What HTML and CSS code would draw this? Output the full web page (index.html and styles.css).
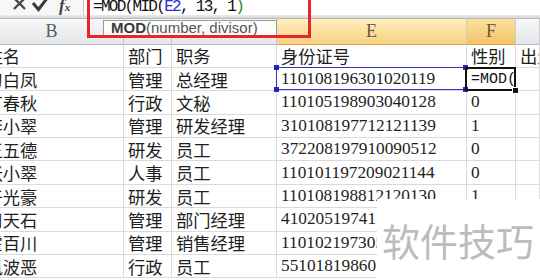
FILE: index.html
```html
<!DOCTYPE html>
<html>
<head>
  <meta charset="utf-8">
  <title>身份证号提取性别</title>
  <link rel="stylesheet" href="styles.css">
</head>
<body>
  <!-- formula bar -->
  <div class="formula-bar">
    <div class="fx-buttons">
      <svg class="btn-icons" width="52" height="15" viewBox="0 0 52 15">
        <path d="M14 -2 L25 9 M25 -2 L14 9" stroke="#4a4a4a" stroke-width="2.4" fill="none"/>
        <path d="M33 3 L38.5 9.5 L48 -3" stroke="#3a3a3a" stroke-width="3" fill="none"/>
      </svg>
      <span class="btn-fx">f<span class="fx-x">x</span></span>
    </div>
    <div class="formula-input">=MOD(MID(<span class="ref">E2</span>, 13, 1<span class="paren">)</span></div>
  </div>
  <div class="bar-gap"></div>

  <!-- sheet -->
  <div class="sheet">
    <div class="row head">
      <div class="h col-b">B</div>
      <div class="h">C</div>
      <div class="h">D</div>
      <div class="h sel">E</div>
      <div class="h sel active-col">F</div>
      <div class="h"></div>
    </div>
    <div class="row">
      <div class="c name">姓名</div>
      <div class="c">部门</div>
      <div class="c">职务</div>
      <div class="c">身份证号</div>
      <div class="c">性别</div>
      <div class="c">出生日期</div>
    </div>
    <div class="row">
      <div class="c name">刀白凤</div>
      <div class="c">管理</div>
      <div class="c">总经理</div>
      <div class="c ref-range">110108196301020119</div>
      <div class="c active"><span class="edit">=MOD(</span></div>
      <div class="c"></div>
    </div>
    <div class="row">
      <div class="c name">丁春秋</div>
      <div class="c">行政</div>
      <div class="c">文秘</div>
      <div class="c">110105198903040128</div>
      <div class="c">0</div>
      <div class="c"></div>
    </div>
    <div class="row">
      <div class="c name">李小翠</div>
      <div class="c">管理</div>
      <div class="c">研发经理</div>
      <div class="c">310108197712121139</div>
      <div class="c">1</div>
      <div class="c"></div>
    </div>
    <div class="row">
      <div class="c name">王五德</div>
      <div class="c">研发</div>
      <div class="c">员工</div>
      <div class="c">372208197910090512</div>
      <div class="c">0</div>
      <div class="c"></div>
    </div>
    <div class="row">
      <div class="c name">张小翠</div>
      <div class="c">人事</div>
      <div class="c">员工</div>
      <div class="c">110101197209021144</div>
      <div class="c">0</div>
      <div class="c"></div>
    </div>
    <div class="row">
      <div class="c name">干光豪</div>
      <div class="c">研发</div>
      <div class="c">员工</div>
      <div class="c">110108198812120130</div>
      <div class="c">1</div>
      <div class="c"></div>
    </div>
    <div class="row">
      <div class="c name">司天石</div>
      <div class="c">管理</div>
      <div class="c">部门经理</div>
      <div class="c">410205197411150217</div>
      <div class="c">1</div>
      <div class="c"></div>
    </div>
    <div class="row">
      <div class="c name">霍百川</div>
      <div class="c">管理</div>
      <div class="c">销售经理</div>
      <div class="c">110102197305120124</div>
      <div class="c">0</div>
      <div class="c"></div>
    </div>
    <div class="row">
      <div class="c name">风波恶</div>
      <div class="c">行政</div>
      <div class="c">员工</div>
      <div class="c">551018198607311126</div>
      <div class="c">0</div>
      <div class="c"></div>
    </div>
  </div>

  <!-- overlays -->
  <div class="tip"><b>MOD</b>(number, divisor)</div>
  <div class="annot"></div>
  <div class="watermark">软件技巧</div>
</body>
</html>
```

FILE: styles.css
```css
body {
  margin: 0;
  width: 540px;
  height: 280px;
  overflow: hidden;
  position: relative;
  background-color: #fff;
  font-family: "Liberation Serif", "Noto Sans CJK SC", serif;
  color: #1e1e1e;
}

/* formula bar */
.formula-bar {
  display: flex;
  height: 15px;
  overflow: hidden;
  background-color: #fff;
}

.fx-buttons {
  width: 83px;
  display: flex;
  align-items: flex-start;
  background-color: #f7f7f7;
  border-right: 1px solid #c8c8c8;
}

.btn-icons {
  display: block;
}

.btn-fx {
  margin-left: 7px;
  font-family: "Liberation Serif", serif;
  font-style: italic;
  font-weight: bold;
  font-size: 17px;
  line-height: 12px;
  color: #444;
}

.fx-x {
  font-size: 11px;
}

.formula-input {
  flex: 1;
  padding-left: 9px;
  font-family: "Liberation Mono", monospace;
  font-size: 16px;
  letter-spacing: -1.7px;
  line-height: 14px;
  color: #111;
  white-space: nowrap;
}

.ref {
  color: #2d2dd6;
}

.paren {
  color: #1d8a1d;
}

.bar-gap {
  height: 3px;
  background: linear-gradient(#ececec, #d6d6d6);
  border-bottom: 1px solid #b9b9b9;
}

/* sheet grid */
.sheet {
  height: 261px;
  overflow: hidden;
}

.row {
  display: grid;
  grid-template-columns: 124px 48px 105px 190px 49px 1fr;
  height: 23.4px;
}

.row.head {
  height: 25.5px;
}

.h {
  display: flex;
  align-items: center;
  justify-content: center;
  background: linear-gradient(#f7f8f9, #e3e5e8);
  border-right: 1px solid #c9cbce;
  border-bottom: 1px solid #b8bcc2;
  font-size: 18px;
  color: #5a5a5a;
  box-sizing: border-box;
}

.h.col-b {
  padding-right: 20px;
}

.h.sel {
  background: linear-gradient(#fdefbd, #f7d082);
  border-bottom-color: #e1a342;
  color: #6b5a3a;
}

.h.active-col {
  background: linear-gradient(#fbe2a0, #f3c266);
}

.c {
  display: flex;
  align-items: center;
  padding-left: 4px;
  border-right: 1px solid #dadada;
  border-bottom: 1px solid #dadada;
  white-space: nowrap;
  overflow: hidden;
  font-size: 17.3px;
  box-sizing: border-box;
}

.c.name {
  padding-left: 0;
  text-indent: -14.5px;
}

.edit {
  font-family: "Liberation Mono", monospace;
  font-size: 15px;
  color: #111;
}

/* range picked up by the formula */
.ref-range {
  position: relative;
  overflow: visible;
}

.ref-range::before {
  content: "";
  position: absolute;
  top: -1px;
  left: -1px;
  right: 0;
  bottom: 0;
  border: 1.5px solid #3232c8;
}

.ref-range::after {
  content: "";
  position: absolute;
  top: -3px;
  left: -3px;
  right: -2px;
  bottom: -2px;
  background:
    linear-gradient(#2424c0, #2424c0) left top / 5px 5px no-repeat,
    linear-gradient(#2424c0, #2424c0) right top / 5px 5px no-repeat,
    linear-gradient(#2424c0, #2424c0) left bottom / 5px 5px no-repeat,
    linear-gradient(#2424c0, #2424c0) right bottom / 5px 5px no-repeat;
}

/* active cell */
.active {
  position: relative;
  overflow: visible;
}

.active::after {
  content: "";
  position: absolute;
  top: -1px;
  left: -2px;
  right: -1px;
  bottom: -1px;
  border: 2px solid #111;
}

.active::before {
  content: "";
  position: absolute;
  right: -4px;
  bottom: -4px;
  width: 5px;
  height: 5px;
  background-color: #111;
  border: 1px solid #fff;
  z-index: 2;
}

/* function tooltip */
.tip {
  position: absolute;
  left: 103px;
  top: 20px;
  width: 174px;
  height: 16px;
  box-sizing: border-box;
  padding-left: 7px;
  background-color: #fdfdfd;
  border: 1px solid #9a9a9a;
  font-family: "Liberation Sans", sans-serif;
  font-size: 15px;
  line-height: 14px;
  color: #555;
  white-space: nowrap;
}

.tip b {
  color: #3a3a3a;
}

/* red annotation frame */
.annot {
  position: absolute;
  left: 87px;
  top: -4px;
  width: 224px;
  height: 42px;
  box-sizing: border-box;
  border: 3px solid #e5262b;
}

/* watermark */
.watermark {
  position: absolute;
  left: 377px;
  top: 199px;
  right: 0;
  bottom: 0;
  display: flex;
  align-items: center;
  padding-left: 5px;
  background-color: #fff;
  font-family: "Noto Sans CJK SC", sans-serif;
  font-size: 38px;
  color: #bcbcbc;
}
```
